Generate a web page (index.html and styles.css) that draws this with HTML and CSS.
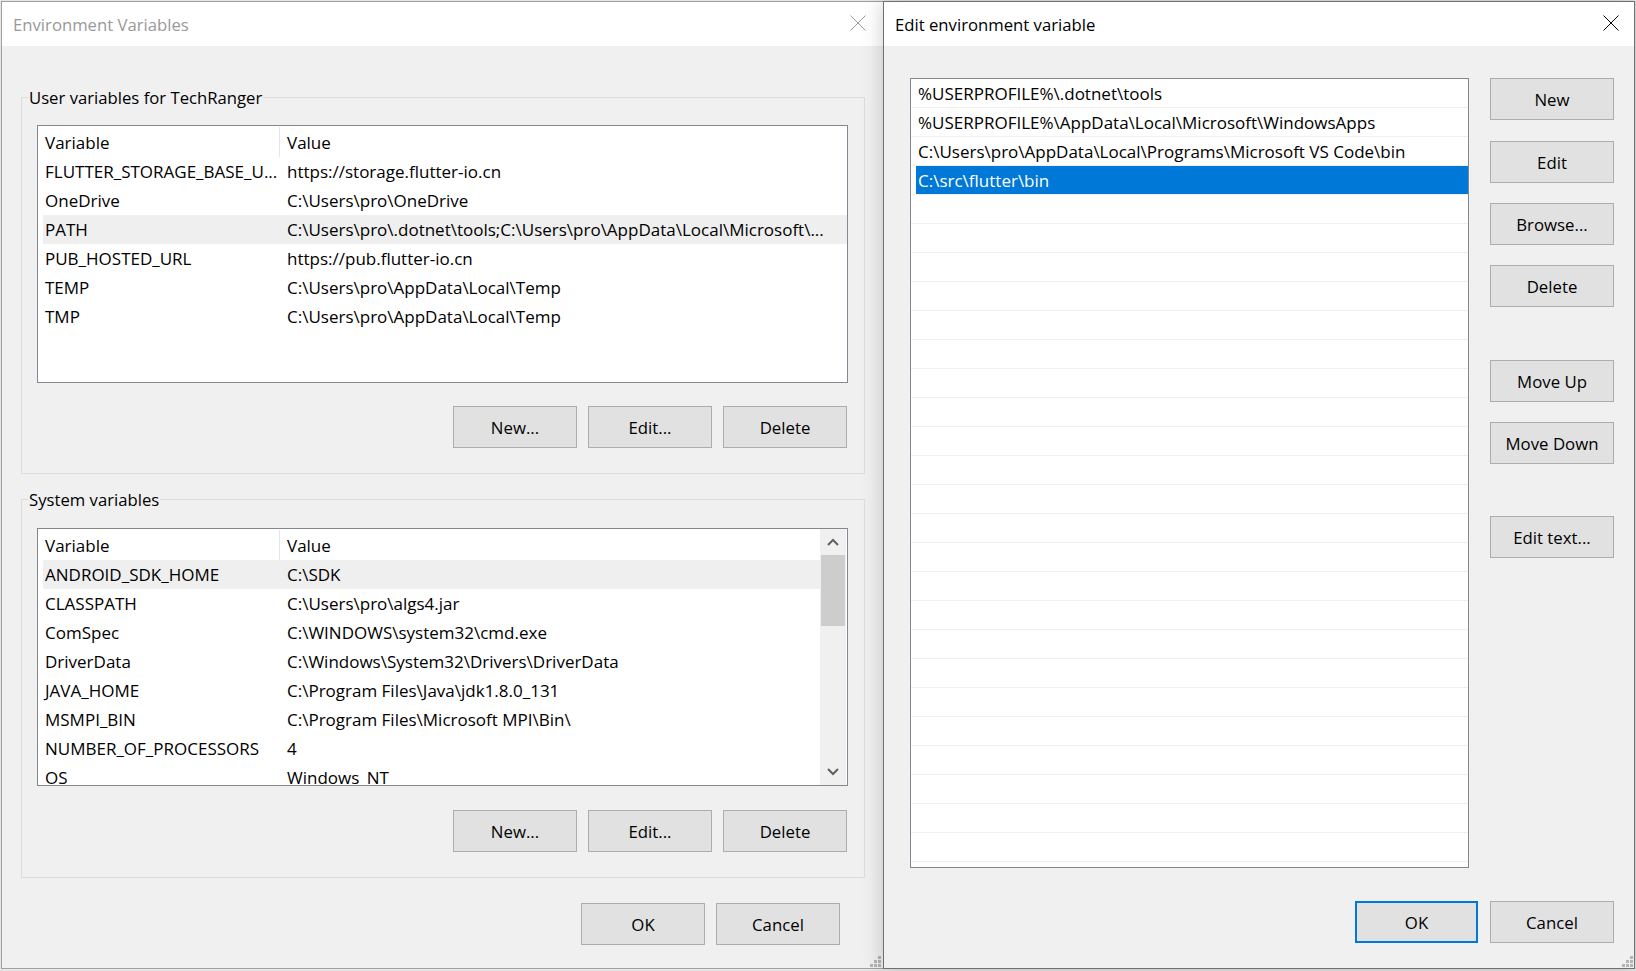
FILE: index.html
```html
<!DOCTYPE html>
<html>
  <head>
    <meta charset="utf-8">
    <title>Environment Variables</title>
    <link rel="stylesheet" href="styles.css">
  </head>
  <body>
    <div class="desktop">

      <!-- Environment Variables (inactive, behind) -->
      <div class="window env-window">
        <div class="titlebar">
          <span class="title">Environment Variables</span>
          <span class="close">
            <svg width="16" height="16" viewBox="0 0 16 16"><path d="M0.5 0.5L15.5 15.5M15.5 0.5L0.5 15.5" /></svg>
          </span>
        </div>
        <div class="env-body">
          <div class="group">
            <div class="group-label">User variables for TechRanger</div>
            <div class="listview">
              <div class="lv-main">
                <div class="lv-header"><span class="col-var">Variable</span><span class="col-val">Value</span></div>
                <div class="lv-row"><span class="col-var">FLUTTER_STORAGE_BASE_U...</span><span class="col-val">https://storage.flutter-io.cn</span></div>
                <div class="lv-row"><span class="col-var">OneDrive</span><span class="col-val">C:\Users\pro\OneDrive</span></div>
                <div class="lv-row selected"><span class="col-var">PATH</span><span class="col-val">C:\Users\pro\.dotnet\tools;C:\Users\pro\AppData\Local\Microsoft\...</span></div>
                <div class="lv-row"><span class="col-var">PUB_HOSTED_URL</span><span class="col-val">https://pub.flutter-io.cn</span></div>
                <div class="lv-row"><span class="col-var">TEMP</span><span class="col-val">C:\Users\pro\AppData\Local\Temp</span></div>
                <div class="lv-row"><span class="col-var">TMP</span><span class="col-val">C:\Users\pro\AppData\Local\Temp</span></div>
              </div>
            </div>
            <div class="btn-row">
              <button class="btn">New...</button>
              <button class="btn">Edit...</button>
              <button class="btn">Delete</button>
            </div>
          </div>

          <div class="group group-system">
            <div class="group-label">System variables</div>
            <div class="listview">
              <div class="lv-main">
                <div class="lv-header"><span class="col-var">Variable</span><span class="col-val">Value</span></div>
                <div class="lv-row selected"><span class="col-var">ANDROID_SDK_HOME</span><span class="col-val">C:\SDK</span></div>
                <div class="lv-row"><span class="col-var">CLASSPATH</span><span class="col-val">C:\Users\pro\algs4.jar</span></div>
                <div class="lv-row"><span class="col-var">ComSpec</span><span class="col-val">C:\WINDOWS\system32\cmd.exe</span></div>
                <div class="lv-row"><span class="col-var">DriverData</span><span class="col-val">C:\Windows\System32\Drivers\DriverData</span></div>
                <div class="lv-row"><span class="col-var">JAVA_HOME</span><span class="col-val">C:\Program Files\Java\jdk1.8.0_131</span></div>
                <div class="lv-row"><span class="col-var">MSMPI_BIN</span><span class="col-val">C:\Program Files\Microsoft MPI\Bin\</span></div>
                <div class="lv-row"><span class="col-var">NUMBER_OF_PROCESSORS</span><span class="col-val">4</span></div>
                <div class="lv-row"><span class="col-var">OS</span><span class="col-val">Windows_NT</span></div>
              </div>
              <div class="scrollbar">
                <span class="sb-arrow">
                  <svg width="12" height="8" viewBox="0 0 12 8"><path d="M1 7L6 2L11 7" /></svg>
                </span>
                <div class="sb-track"><div class="sb-thumb"></div></div>
                <span class="sb-arrow">
                  <svg width="12" height="8" viewBox="0 0 12 8"><path d="M1 1L6 6L11 1" /></svg>
                </span>
              </div>
            </div>
            <div class="btn-row">
              <button class="btn">New...</button>
              <button class="btn">Edit...</button>
              <button class="btn">Delete</button>
            </div>
          </div>

          <div class="dialog-buttons env-buttons">
            <button class="btn">OK</button>
            <button class="btn">Cancel</button>
          </div>
        </div>
        <svg class="grip" width="12" height="12" viewBox="0 0 12 12">
          <rect x="9" y="1" width="3" height="3" />
          <rect x="5" y="5" width="3" height="3" /><rect x="9" y="5" width="3" height="3" />
          <rect x="1" y="9" width="3" height="3" /><rect x="5" y="9" width="3" height="3" /><rect x="9" y="9" width="3" height="3" />
        </svg>
      </div>

      <!-- Edit environment variable (active, in front) -->
      <div class="window edit-window">
        <div class="titlebar">
          <span class="title">Edit environment variable</span>
          <span class="close">
            <svg width="16" height="16" viewBox="0 0 16 16"><path d="M0.5 0.5L15.5 15.5M15.5 0.5L0.5 15.5" /></svg>
          </span>
        </div>
        <div class="edit-body">
          <div class="edit-main">
            <div class="path-list">
              <div class="path-row"><span>%USERPROFILE%\.dotnet\tools</span></div>
              <div class="path-row"><span>%USERPROFILE%\AppData\Local\Microsoft\WindowsApps</span></div>
              <div class="path-row"><span>C:\Users\pro\AppData\Local\Programs\Microsoft VS Code\bin</span></div>
              <div class="path-row selected"><span>C:\src\flutter\bin</span></div>
              <div class="path-row"></div><div class="path-row"></div><div class="path-row"></div><div class="path-row"></div>
              <div class="path-row"></div><div class="path-row"></div><div class="path-row"></div><div class="path-row"></div>
              <div class="path-row"></div><div class="path-row"></div><div class="path-row"></div><div class="path-row"></div>
              <div class="path-row"></div><div class="path-row"></div><div class="path-row"></div><div class="path-row"></div>
              <div class="path-row"></div><div class="path-row"></div><div class="path-row"></div><div class="path-row"></div>
              <div class="path-row"></div><div class="path-row"></div><div class="path-row"></div><div class="path-row"></div>
            </div>
            <div class="side-buttons">
              <button class="btn">New</button>
              <button class="btn">Edit</button>
              <button class="btn">Browse...</button>
              <button class="btn">Delete</button>
              <button class="btn gap-lg">Move Up</button>
              <button class="btn">Move Down</button>
              <button class="btn gap-lg2">Edit text...</button>
            </div>
          </div>
          <div class="dialog-buttons edit-buttons">
            <button class="btn btn-default">OK</button>
            <button class="btn">Cancel</button>
          </div>
        </div>
        <svg class="grip" width="12" height="12" viewBox="0 0 12 12">
          <rect x="9" y="1" width="3" height="3" />
          <rect x="5" y="5" width="3" height="3" /><rect x="9" y="5" width="3" height="3" />
          <rect x="1" y="9" width="3" height="3" /><rect x="5" y="9" width="3" height="3" /><rect x="9" y="9" width="3" height="3" />
        </svg>
      </div>

    </div>
  </body>
</html>
```

FILE: styles.css
```css
:root {
  --face: #f0f0f0;
  --btn-bg: #e1e1e1;
  --btn-border: #adadad;
  --list-border: #828790;
  --group-border: #dcdcdc;
  --accent: #0078d7;
  --font: "Open Sans", "Noto Sans", sans-serif;
}

* {
  box-sizing: border-box;
}

html,
body {
  margin: 0;
}

body {
  background: #e6e6e6;
  font-family: var(--font);
  font-size: 17px;
  color: #000;
}

.desktop {
  display: flex;
  align-items: flex-start;
  height: 971px;
  padding: 1px 0 0 1px;
  overflow: hidden;
}

/* ---------- windows ---------- */

.window {
  position: relative;
  display: flex;
  flex-direction: column;
  flex: none;
  height: 968px;
  background: var(--face);
}

.env-window {
  width: 882px;
  border: 1px solid #a0a0a0;
  border-right: none;
}

.edit-window {
  width: 752px;
  border: 1px solid #6f6f6f;
  box-shadow: 0 0 20px rgba(0, 0, 0, 0.2);
  z-index: 1;
}

.titlebar {
  display: flex;
  align-items: center;
  justify-content: space-between;
  height: 44px;
  background: #fff;
  flex: none;
}

.title {
  padding-left: 11px;
  font-size: 16.7px;
}

.env-window .title {
  color: #999;
}

.close {
  display: flex;
  margin-top: -2px;
}

.close svg path {
  stroke: #000;
  stroke-width: 1;
  fill: none;
}

.env-window .close {
  margin-right: 17px;
}

.env-window .close svg path {
  stroke: #9a9a9a;
}

.edit-window .close {
  margin-right: 15px;
}

.grip {
  position: absolute;
  right: 1px;
  bottom: 1px;
}

.grip rect {
  fill: #b4b4b4;
}

.env-window .grip {
  right: 2px;
}

/* ---------- buttons ---------- */

.btn {
  width: 124px;
  height: 42px;
  padding: 0;
  background: var(--btn-bg);
  border: 1px solid var(--btn-border);
  border-radius: 0;
  font-family: var(--font);
  font-size: 16.8px;
  color: #000;
}

.btn-default {
  border: 2px solid var(--accent);
}

.dialog-buttons {
  display: flex;
  justify-content: flex-end;
  gap: 11px;
}

/* ---------- environment variables dialog ---------- */

.env-body {
  padding: 0 0 0 19px;
}

.group {
  width: 844px;
  margin-top: 51px;
  padding-bottom: 25px;
  border: 1px solid var(--group-border);
}

.group + .group {
  margin-top: 25px;
}

.group-label {
  width: fit-content;
  margin: -12px 0 0 6px;
  padding: 0 1px;
  font-size: 16.7px;
  line-height: 24px;
  background: var(--face);
}

.listview {
  display: flex;
  height: 258px;
  margin: 15px 16px 0 15px;
  background: #fff;
  border: 1px solid var(--list-border);
  overflow: hidden;
}

.group-system .listview {
  margin-top: 16px;
}

.lv-main {
  flex: 1;
  min-width: 0;
}

.lv-header,
.lv-row {
  display: flex;
  margin-left: 5px;
  white-space: nowrap;
}

.lv-header {
  height: 31px;
  line-height: 31px;
  padding-top: 1px;
}

.lv-row {
  height: 29px;
  line-height: 28px;
  padding-top: 1px;
}

.lv-row.selected {
  background: #efefef;
}

.col-var {
  flex: none;
  width: 237px;
  padding-left: 2px;
  overflow: hidden;
}

.col-val {
  flex: 1;
  padding-left: 7px;
  overflow: hidden;
}

.lv-header .col-var {
  border-right: 1px solid #e5e5e5;
}

.scrollbar {
  display: flex;
  flex-direction: column;
  flex: none;
  width: 26px;
  margin-right: 1px;
  background: var(--face);
}

.sb-arrow {
  display: flex;
  align-items: center;
  justify-content: center;
  height: 26px;
}

.sb-arrow path {
  stroke: #606060;
  stroke-width: 2;
  fill: none;
}

.sb-track {
  flex: 1;
  padding: 0 1px;
}

.sb-thumb {
  height: 71px;
  background: #cdcdcd;
}

.btn-row {
  display: flex;
  justify-content: flex-end;
  gap: 11px;
  margin: 23px 17px 0 0;
}

.group-system .btn-row {
  margin-top: 24px;
}

.env-buttons {
  margin: 25px 43px 0 0;
}

/* ---------- edit environment variable dialog ---------- */

.edit-body {
  padding: 32px 20px 0 26px;
}

.edit-main {
  display: flex;
  gap: 21px;
}

.path-list {
  flex: none;
  width: 559px;
  height: 790px;
  background: #fff;
  border: 1px solid var(--list-border);
  overflow: hidden;
}

.path-row {
  height: 29px;
  border-bottom: 1px solid #efefef;
  white-space: nowrap;
}

.path-row span {
  display: block;
  height: 28px;
  margin-left: 5px;
  padding: 1px 0 0 2px;
  line-height: 28px;
}

.path-row.selected span {
  background: var(--accent);
  color: #fff;
}

.side-buttons {
  display: flex;
  flex-direction: column;
  gap: 20px;
}

.side-buttons .btn:nth-child(2) {
  margin-top: 1px;
}

.side-buttons .gap-lg {
  margin-top: 33px;
}

.side-buttons .gap-lg2 {
  margin-top: 32px;
}

.edit-buttons {
  margin-top: 33px;
  gap: 12px;
}

.edit-buttons .btn-default {
  width: 123px;
}
```
